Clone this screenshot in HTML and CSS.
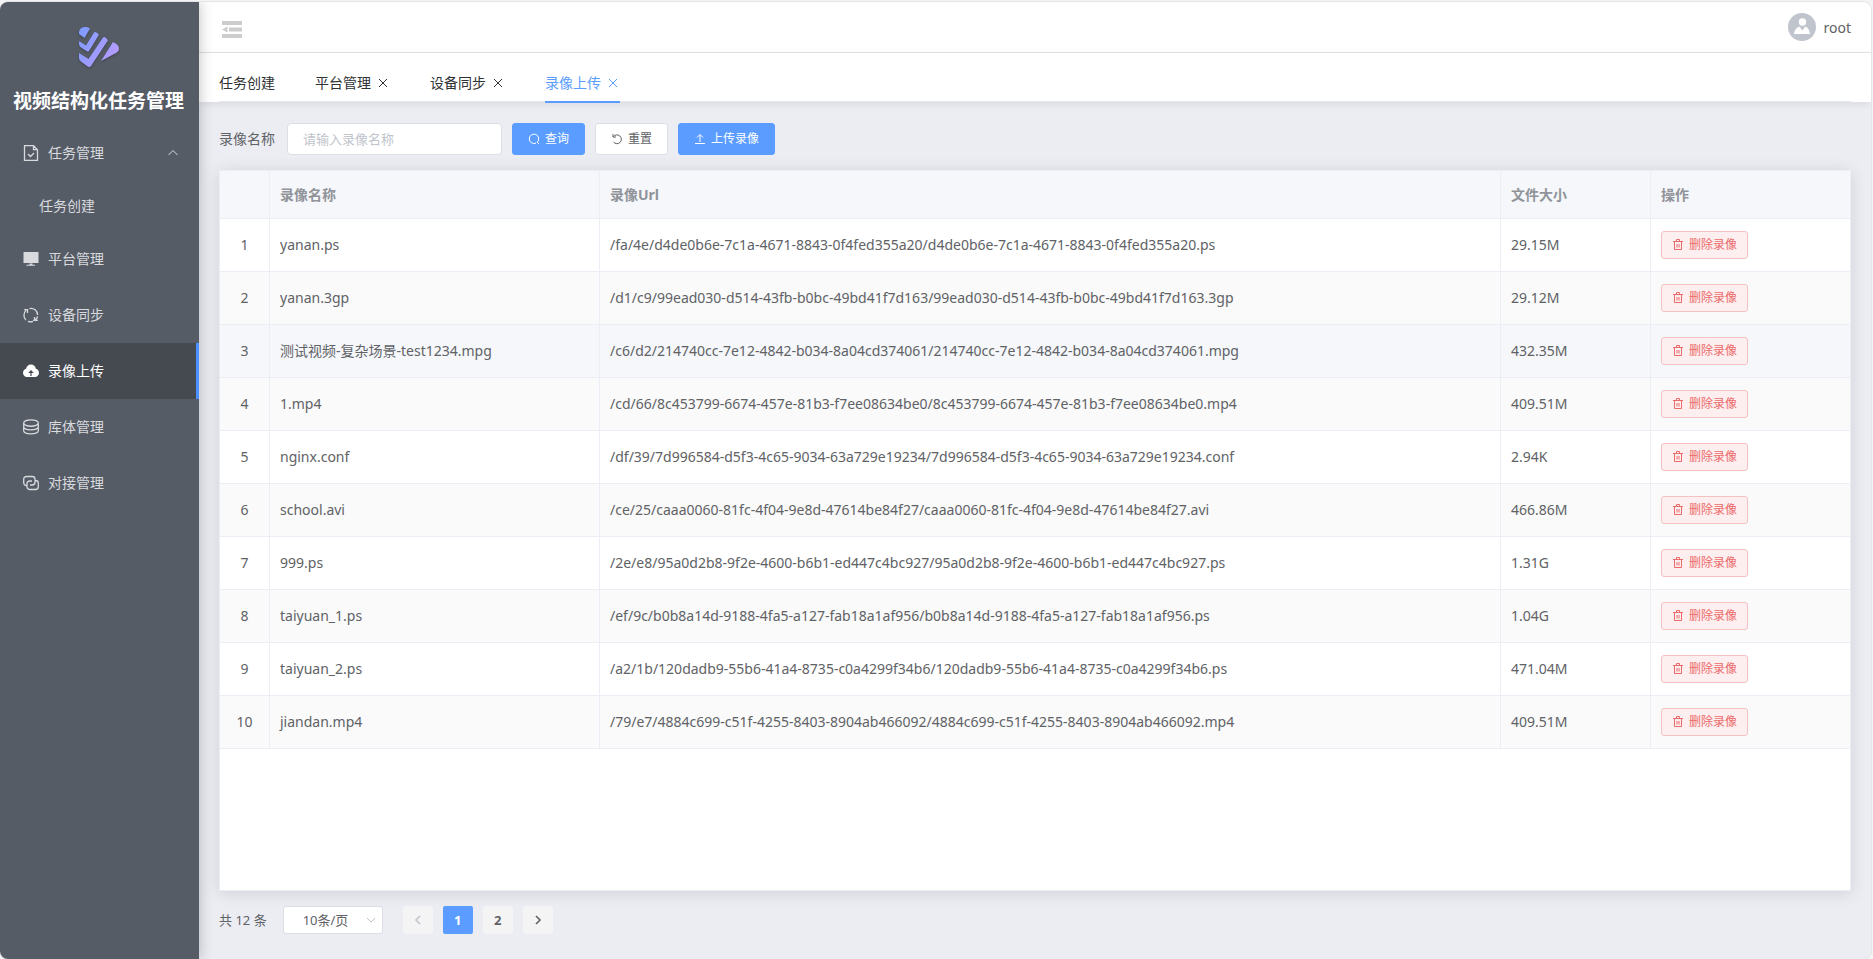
FILE: index.html
```html
<!DOCTYPE html>
<html lang="zh-CN">
<head>
<meta charset="utf-8">
<title>视频结构化任务管理</title>
<link rel="stylesheet" href="styles.css">
</head>
<body>
<div class="app">
  <aside class="sidebar">
    <div class="brand">
      <svg class="brand-logo" viewBox="0 0 40 40" aria-hidden="true">
        <defs>
          <linearGradient id="logo-fill" x1="0" y1="0" x2="1" y2="0.6">
            <stop offset="0" stop-color="#7b9bff"/>
            <stop offset="1" stop-color="#b69cff"/>
          </linearGradient>
        </defs>
        <path fill="url(#logo-fill)" d="M0 6C0 2 3 0 6 0c2 0 3.500.500 5 1.500L5.500 11 0 7zM0 14l7 4.500L15 5.500q1-1 2.500 0l1.500 1q1 1 .500 2L10 24q-1 1-2.500 0L2 20.500Q0 19 0 17zM0 26l9.500 6L24 10.500q1-1 2.500 0L28 12q1 1 .500 2L12 39q-1.500 2-4 0L2 34.500Q0 33 0 31zM34 15c4 2 6 4 6 6.500 0 3-2 4-5 5.500L22 34z"/>
      </svg>
      <h1 class="brand-name">视频结构化任务管理</h1>
    </div>
    <nav class="menu">
      <button class="menu-item" type="button" aria-expanded="true">
        <svg class="menu-icon" viewBox="0 0 16 16" aria-hidden="true"><path class="line medium" d="M1.500.700h9l4 4v10.600h-13zM10.500.700v4h4M5 9l2.500 2.500L11 8"/></svg>
        <span>任务管理</span>
        <svg class="menu-arrow" viewBox="0 0 12 12" aria-hidden="true"><path class="line" d="M1.500 8 6 3.500 10.500 8"/></svg>
      </button>
      <a class="menu-item menu-sub" href="#task-create">任务创建</a>
      <a class="menu-item" href="#platform">
        <svg class="menu-icon" viewBox="0 0 16 16" aria-hidden="true"><path class="solid" d="M1 1h14q.500 0 .500.500v10.500h-15V1.500Q.500 1 1 1zM6.500 12.500h3v1.200h2.500v1H3.500v-1h3z"/></svg>
        <span>平台管理</span>
      </a>
      <a class="menu-item" href="#sync">
        <svg class="menu-icon" viewBox="0 0 16 16" aria-hidden="true"><path class="line medium" d="M3 13A6.600 6.600 0 0 1 3 3.400M1.200 2.600h3.300v3.300M6.500 1.600A6.600 6.600 0 0 1 14.600 8M13 13.400h-2.800M14.700 13.400h-3.200v-3.300M14.600 9.500A6.600 6.600 0 0 1 12.400 13M10 14.400a6.600 6.600 0 0 1-5 0"/></svg>
        <span>设备同步</span>
      </a>
      <a class="menu-item is-active" href="#upload" aria-current="page">
        <svg class="menu-icon" viewBox="0 0 16 16" aria-hidden="true"><path class="solid" fill-rule="evenodd" d="M8 1.500c2.600 0 4.500 1.700 4.900 4.200C14.800 6.200 16 7.800 16 9.800c0 2.400-1.800 4.200-4 4.200H4c-2.300 0-4-1.800-4-4.200 0-2 1.300-3.600 3.100-4.100C3.500 3.200 5.400 1.500 8 1.500zM8 7 5.200 10h2.200v3h1.200v-3h2.200z"/></svg>
        <span>录像上传</span>
      </a>
      <a class="menu-item" href="#library">
        <svg class="menu-icon" viewBox="0 0 16 16" aria-hidden="true"><path class="line medium" d="M.700 4C.700-.300 15.300-.300 15.300 4S.700 8.300.700 4zM.700 4v7.800c0 4 14.600 4 14.600 0V4M.700 7.800c0 4 14.600 4 14.600 0"/></svg>
        <span>库体管理</span>
      </a>
      <a class="menu-item" href="#integration">
        <svg class="menu-icon" viewBox="0 0 16 16" aria-hidden="true"><path class="line medium" d="M3.500 10.500A2.800 2.800 0 0 1 .700 7.700V4.300A2.800 2.800 0 0 1 3.500 1.500h5.700A2.800 2.800 0 0 1 12 4.300v2.900A2.800 2.800 0 0 1 9.200 10H7M12.500 5.500a2.800 2.800 0 0 1 2.800 2.800v3.400a2.800 2.800 0 0 1-2.800 2.800H6.800A2.800 2.800 0 0 1 4 11.700V8.800A2.800 2.800 0 0 1 6.800 6H9"/></svg>
        <span>对接管理</span>
      </a>
    </nav>
  </aside>

  <div class="main">
    <header class="topbar">
      <button class="fold" type="button" aria-label="收起菜单">
        <svg viewBox="0 0 20 17" aria-hidden="true"><path d="M0 0h20v4H0zM7 6.500h13v4H7zM0 13h20v4H0zM5.500 5.500v6L0 8.500z"/></svg>
      </button>
      <button class="user" type="button">
        <svg class="avatar" viewBox="0 0 28 28" aria-hidden="true"><circle cx="14" cy="14" r="14" fill="#c0c4cc"/><circle cx="14.500" cy="9" r="3.700" fill="#fff"/><path fill="#fff" d="M6 20.500q1-5.500 5.500-7L14.300 17.500 17.500 13.500q3.500 1.500 4.500 7 0 .500-.500.500h-15q-.500 0-.500-.500z"/></svg>
        <span class="user-name">root</span>
      </button>
    </header>

    <div class="tabbar">
      <div class="tabs">
        <a class="tab" href="#task-create">任务创建</a>
        <a class="tab" href="#platform">平台管理<svg class="tab-close" viewBox="0 0 14 14" aria-hidden="true"><path class="line" d="M3 3l8 8M11 3l-8 8"/></svg></a>
        <a class="tab" href="#sync">设备同步<svg class="tab-close" viewBox="0 0 14 14" aria-hidden="true"><path class="line" d="M3 3l8 8M11 3l-8 8"/></svg></a>
        <a class="tab is-active" href="#upload" aria-current="page">录像上传<svg class="tab-close" viewBox="0 0 14 14" aria-hidden="true"><path class="line" d="M3 3l8 8M11 3l-8 8"/></svg></a>
      </div>
    </div>

    <main class="content">
      <form class="search">
        <label class="search-label" for="video-name">录像名称</label>
        <input class="field" id="video-name" type="text" placeholder="请输入录像名称">
        <button class="btn btn-primary" type="button"><svg class="btn-icon" viewBox="0 0 12 12" aria-hidden="true"><path class="line" d="M9.300 9.200A4.700 4.700 0 1 0 8 10.100M9 9l2 2"/></svg>查询</button>
        <button class="btn" type="reset"><svg class="btn-icon" viewBox="0 0 12 12" aria-hidden="true"><path class="line" d="M2.300 3.800A4.400 4.400 0 1 1 2.500 9M2 1v3h3"/></svg>重置</button>
        <button class="btn btn-primary" type="button"><svg class="btn-icon" viewBox="0 0 12 12" aria-hidden="true"><path class="line" d="M1 10.500h10M6 9V2M3 4.500l3-3 3 3"/></svg>上传录像</button>
      </form>

      <section class="panel">
        <table class="table">
          <colgroup><col class="col-index"><col class="col-name"><col><col class="col-size"><col class="col-action"></colgroup>
          <thead>
            <tr><th></th><th>录像名称</th><th>录像Url</th><th>文件大小</th><th>操作</th></tr>
          </thead>
          <tbody id="rows"></tbody>
        </table>
      </section>

      <footer class="pager">
        <span class="total">共 12 条</span>
        <span class="page-size">
          <select class="page-select" aria-label="每页条数"><option>10条/页</option><option>20条/页</option></select>
          <svg class="select-arrow" viewBox="0 0 12 12" aria-hidden="true"><path class="line" d="M2 4l4 4 4-4"/></svg>
        </span>
        <button class="page" type="button" disabled aria-label="上一页"><svg class="btn-icon" viewBox="0 0 12 12" aria-hidden="true"><path class="line bold" d="M8 2 4 6l4 4"/></svg></button>
        <button class="page is-current" type="button" aria-current="page">1</button>
        <button class="page" type="button">2</button>
        <button class="page" type="button" aria-label="下一页"><svg class="btn-icon" viewBox="0 0 12 12" aria-hidden="true"><path class="line bold" d="M4 2l4 4-4 4"/></svg></button>
      </footer>
    </main>
  </div>
</div>
<script src="rows.js"></script>
</body>
</html>
```
FILE: styles.css
```css
* { box-sizing: border-box; }

body {
  margin: 0;
  padding: 2px 2px 0 0;
  height: 100vh;
  background: #f4f4f4;
  color: #606266;
  font: 14px/20px "Noto Sans", "Noto Sans CJK SC", sans-serif;
}

button, input, select { font: inherit; color: inherit; }
button { cursor: pointer; }
a { color: inherit; text-decoration: none; }

.line { fill: none; stroke: currentColor; stroke-width: 1; }
.line.medium { stroke-width: 1.3; }
.line.bold { stroke-width: 1.6; }
.solid { fill: currentColor; }

.app {
  display: flex;
  height: 100%;
  border-radius: 8px;
  overflow: hidden;
  background: #ecedf3;
  box-shadow: 0 0 0 1px #e4e5e9;
}

/* Sidebar */
.sidebar {
  position: relative;
  z-index: 1;
  flex: none;
  width: 199px;
  background: #565c66;
  color: #d8dade;
  box-shadow: 2px 0 12px rgba(0, 0, 0, 0.2);
}

.brand {
  display: flex;
  flex-direction: column;
  align-items: center;
  gap: 20px;
  padding: 25px 2px 10px 0;
}

.brand-logo {
  width: 40px;
  height: 40px;
  filter: drop-shadow(0 1px 1px rgba(0, 0, 0, 0.3));
}

.brand-name {
  margin: 0;
  font-size: 19px;
  line-height: 28px;
  color: #fff;
}

.menu { display: flex; flex-direction: column; }

.menu-item {
  display: flex;
  align-items: center;
  gap: 9px;
  width: 100%;
  height: 56px;
  padding: 0 20px 0 23px;
  border: 0;
  background: none;
  text-align: left;
}

.menu-sub { height: 50px; padding-left: 39px; }
.menu-icon { width: 16px; height: 16px; }
.menu-arrow { width: 12px; height: 12px; margin-left: auto; }

.menu-item.is-active {
  background: #454950;
  border-right: 3px solid #4a90ff;
  color: #fff;
}

/* Header */
.main {
  flex: 1;
  min-width: 0;
  display: flex;
  flex-direction: column;
}

.topbar {
  display: flex;
  align-items: center;
  justify-content: space-between;
  height: 51px;
  padding: 0 20px 0 23px;
  border-bottom: 1px solid #e4e5e8;
  background: #fff;
}

.fold {
  display: flex;
  padding: 4px 0 0;
  border: 0;
  background: none;
  color: #cdcdcd;
}
.fold svg { width: 20px; height: 17px; fill: currentColor; }

.user {
  display: flex;
  align-items: center;
  gap: 8px;
  padding: 0;
  border: 0;
  background: none;
}
.avatar { width: 28px; height: 28px; }
.user-name { padding-top: 2px; }

.tabbar {
  height: 49px;
  padding: 0 20px;
  background: #fff;
  box-shadow: 0 2px 8px rgba(0, 0, 0, 0.08);
}

.tabs {
  display: flex;
  gap: 40px;
  border-bottom: 1px solid #e4e7ed;
}

.tab {
  display: flex;
  align-items: center;
  gap: 5px;
  height: 48px;
  padding-top: 12px;
  color: #303133;
}
.tab.is-active { color: #5a9cff; box-shadow: 0 2px 0 #5a9cff; }
.tab-close { width: 14px; height: 14px; }

/* Search form */
.content {
  flex: 1;
  display: flex;
  flex-direction: column;
  padding: 21px 20px 25px;
}

.search {
  display: flex;
  align-items: center;
  gap: 10px;
  height: 32px;
  margin-bottom: 15px;
}

.search-label { padding-right: 2px; }

.field {
  width: 215px;
  height: 32px;
  padding: 0 15px;
  border: 1px solid #dcdfe6;
  border-radius: 4px;
  background: #fff;
  font-size: 13px;
}
.field::placeholder { color: #c0c4cc; }

.btn {
  display: flex;
  align-items: center;
  gap: 5px;
  height: 32px;
  padding: 0 15px;
  border: 1px solid #dcdfe6;
  border-radius: 3px;
  background: #fff;
  font-size: 12px;
}
.btn-primary {
  border-color: #5a9cff;
  background: #5a9cff;
  color: #fff;
}
.btn-icon { width: 12px; height: 12px; }

/* Table */
.panel {
  flex: 1;
  border: 1px solid #ebeef5;
  background: #fff;
  box-shadow: 0 2px 16px rgba(0, 0, 0, 0.12);
}

.table {
  width: 100%;
  table-layout: fixed;
  border-collapse: separate;
  border-spacing: 0;
}
.col-index { width: 50px; }
.col-name { width: 330px; }
.col-size { width: 150px; }
.col-action { width: 199px; }

.table th,
.table td {
  height: 53px;
  padding: 0 10px;
  border-right: 1px solid #ebeef5;
  border-bottom: 1px solid #ebeef5;
  text-align: left;
}
.table th {
  height: 48px;
  background: #f5f7fa;
  color: #909399;
}
.table td:first-child { text-align: center; }
.table th:last-child,
.table td:last-child { border-right: 0; }
.table tr:nth-child(even) td { background: #fafafa; }
.table tr.is-hover td { background: #f5f7fa; }

.btn-danger {
  height: 28px;
  padding: 0 10px;
  border-color: #f5c1c1;
  background: #fdefef;
  color: #ec6a6a;
}

/* Pagination */
.pager {
  display: flex;
  align-items: center;
  gap: 10px;
  height: 28px;
  margin-top: 15px;
}

.total { padding-right: 6px; font-size: 13px; }

.page-size {
  position: relative;
  display: flex;
  width: 100px;
  margin-right: 10px;
}
.page-select {
  appearance: none;
  width: 100%;
  height: 28px;
  padding: 0 25px 0 19px;
  border: 1px solid #dcdfe6;
  border-radius: 3px;
  background: #fff;
  font-size: 13px;
}
.select-arrow {
  position: absolute;
  top: 8px;
  right: 6px;
  width: 12px;
  height: 12px;
  color: #c0c4cc;
  pointer-events: none;
}

.page {
  display: flex;
  align-items: center;
  justify-content: center;
  width: 30px;
  height: 28px;
  padding: 0;
  border: 0;
  border-radius: 2px;
  background: #f4f4f5;
  font-size: 13px;
  font-weight: 700;
}
.page:disabled { color: #c0c4cc; }
.page.is-current { background: #5a9cff; color: #fff; }
```
FILE: rows.js
```js
const files = [
  ["yanan.ps", "/fa/4e/d4de0b6e-7c1a-4671-8843-0f4fed355a20/d4de0b6e-7c1a-4671-8843-0f4fed355a20.ps", "29.15M"],
  ["yanan.3gp", "/d1/c9/99ead030-d514-43fb-b0bc-49bd41f7d163/99ead030-d514-43fb-b0bc-49bd41f7d163.3gp", "29.12M"],
  ["测试视频-复杂场景-test1234.mpg", "/c6/d2/214740cc-7e12-4842-b034-8a04cd374061/214740cc-7e12-4842-b034-8a04cd374061.mpg", "432.35M"],
  ["1.mp4", "/cd/66/8c453799-6674-457e-81b3-f7ee08634be0/8c453799-6674-457e-81b3-f7ee08634be0.mp4", "409.51M"],
  ["nginx.conf", "/df/39/7d996584-d5f3-4c65-9034-63a729e19234/7d996584-d5f3-4c65-9034-63a729e19234.conf", "2.94K"],
  ["school.avi", "/ce/25/caaa0060-81fc-4f04-9e8d-47614be84f27/caaa0060-81fc-4f04-9e8d-47614be84f27.avi", "466.86M"],
  ["999.ps", "/2e/e8/95a0d2b8-9f2e-4600-b6b1-ed447c4bc927/95a0d2b8-9f2e-4600-b6b1-ed447c4bc927.ps", "1.31G"],
  ["taiyuan_1.ps", "/ef/9c/b0b8a14d-9188-4fa5-a127-fab18a1af956/b0b8a14d-9188-4fa5-a127-fab18a1af956.ps", "1.04G"],
  ["taiyuan_2.ps", "/a2/1b/120dadb9-55b6-41a4-8735-c0a4299f34b6/120dadb9-55b6-41a4-8735-c0a4299f34b6.ps", "471.04M"],
  ["jiandan.mp4", "/79/e7/4884c699-c51f-4255-8403-8904ab466092/4884c699-c51f-4255-8403-8904ab466092.mp4", "409.51M"]
];
const trash = '<svg class="btn-icon" viewBox="0 0 12 12" aria-hidden="true"><path class="line" d="M1 2.500h10M4.500 2.500v-2h3v2M2.500 2.500v8h7v-8M5 5v3.500M7 5v3.500"/></svg>';
document.getElementById("rows").innerHTML = files.map(([name, url, size], i) =>
  `<tr${i === 2 ? ' class="is-hover"' : ""}><td>${i + 1}</td><td>${name}</td><td>${url}</td><td>${size}</td><td><button class="btn btn-danger" type="button">${trash}删除录像</button></td></tr>`
).join("");
```
